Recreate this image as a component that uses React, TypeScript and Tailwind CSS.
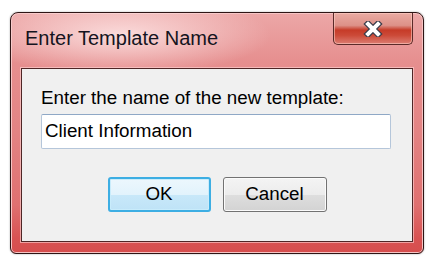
import React from 'react';

const CloseGlyph = () => (
  <svg width="20" height="16" viewBox="0 0 20 16">
    <path d="M5 3 L15 13 M15 3 L5 13" stroke="#3b3c4a" strokeWidth="6.5" strokeLinecap="square" fill="none" />
    <path d="M5 3 L15 13 M15 3 L5 13" stroke="#ffffff" strokeWidth="4" strokeLinecap="square" fill="none" />
  </svg>
);

const App = () => {
  return (
    <div className="w-[442px] h-[271px] bg-white pl-[10px] pt-[12px] font-['Liberation_Sans',Arial,sans-serif]">
      {/* Window frame */}
      <div className="w-[414px] h-[242px] flex flex-col border border-[#2e1515] rounded-t-[8px] rounded-b-[6px] shadow-[inset_0_0_0_1px_#f6c4c4,0_0_2px_rgba(0,0,0,0.35)] bg-[linear-gradient(to_bottom,#eca7a7_0%,#e68f8f_20%,#e38383_50%,#df7070_80%,#d85252_94%,#d64e4e_100%)]">
        {/* Title bar */}
        <div className="h-[55px] flex items-start justify-between pr-[10px] bg-[radial-gradient(ellipse_150px_40px_at_110px_22px,rgba(255,235,235,0.8),rgba(255,235,235,0)_100%)] rounded-t-[8px]">
          <span className="pl-[14px] pt-[12px] text-[20px] leading-[26px] text-[#141420]">Enter Template Name</span>
          <button className="w-[80px] h-[32px] flex items-center justify-center border border-t-0 border-[#5a2a28] rounded-b-[5px] shadow-[inset_0_0_0_1px_rgba(255,210,200,0.55)] bg-[linear-gradient(to_bottom,#e9aaa2_0%,#dd9188_40%,#c63b28_55%,#cc4a38_72%,#dc7d72_100%)]">
            <CloseGlyph />
          </button>
        </div>

        {/* Client area */}
        <div className="mx-[10px] h-[174px] border border-[#4e2626] bg-[#f0f0f0] shadow-[0_0_0_1px_rgba(255,215,215,0.6)] flex flex-col px-[19px]">
          <label className="mt-[17px] text-[18.8px] leading-[24px] text-black">Enter the name of the new template:</label>
          <div className="mt-[4px] h-[35px] w-[350px] flex items-center bg-white rounded-[2px] border border-[#b5c6da] border-t-[#8fa8c6]">
            <span className="pl-[3px] text-[18.8px] text-black">Client Information</span>
          </div>
          <div className="mt-[28px] flex justify-center gap-[12px]">
            <button className="w-[103px] h-[35px] rounded-[3px] border-2 border-[#3daee3] shadow-[inset_0_0_0_1px_#c9ecfb] bg-[linear-gradient(to_bottom,#ecf7fd_0%,#e2f3fc_50%,#c8e8f9_51%,#bfe3f7_100%)] text-[18.8px] text-black flex items-center justify-center">
              OK
            </button>
            <button className="w-[104px] h-[35px] rounded-[3px] border border-[#727272] shadow-[inset_0_0_0_1px_#fbfbfb] bg-[linear-gradient(to_bottom,#f4f4f4_0%,#ececec_50%,#dedede_51%,#d3d3d3_100%)] text-[18.8px] text-black flex items-center justify-center">
              Cancel
            </button>
          </div>
        </div>
      </div>
    </div>
  );
};

export default App;
